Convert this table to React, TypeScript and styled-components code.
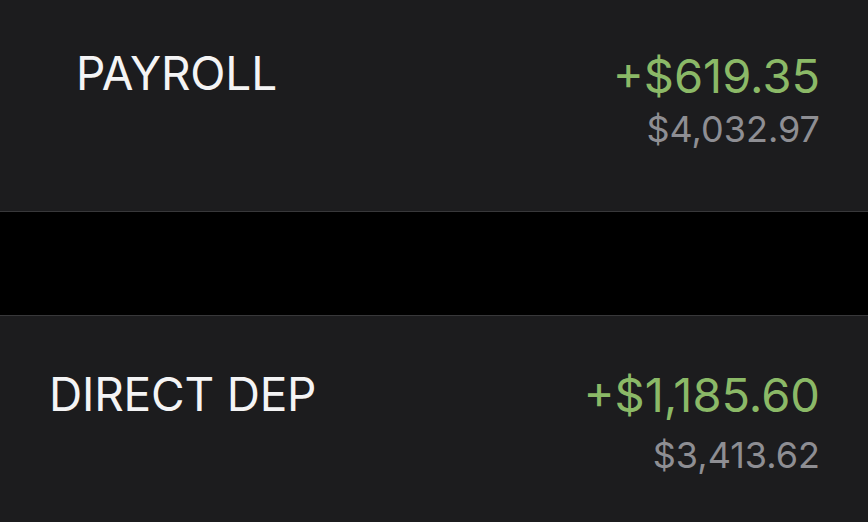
import React from 'react';
import styled, { createGlobalStyle } from 'styled-components';

const surface = '#1c1c1e';
const separator = '#38383a';
const positive = '#8bb967';
const secondary = '#8e8e93';

const GlobalStyle = createGlobalStyle`
  html, body {
    margin: 0;
    padding: 0;
    background: ${surface};
  }

  body {
    font-family: Inter, 'Noto Sans', sans-serif;
    -webkit-font-smoothing: antialiased;
  }
`;

const Screen = styled.div`
  display: flex;
  flex-direction: column;
  width: 868px;
  height: 522px;
  overflow: hidden;
  background: #000;
`;

const Row = styled.div<{ padTop: number; indent: number; edge: 'top' | 'bottom' }>`
  display: flex;
  justify-content: space-between;
  align-items: flex-start;
  background: ${surface};
  padding: ${(p) => p.padTop}px 48px 0 ${(p) => p.indent}px;
  ${(p) => (p.edge === 'top' ? 'border-top' : 'border-bottom')}: 1px solid ${separator};
`;

const FirstRow = styled(Row)`
  height: 212px;
  box-sizing: border-box;
`;

const LastRow = styled(Row)`
  flex: 1;
`;

const Gap = styled.div`
  height: 103px;
  background: #000;
`;

const Label = styled.div`
  color: #f4f4f5;
  font-size: 46px;
  line-height: 1;
  letter-spacing: -0.2px;
`;

const Amounts = styled.div<{ offset: number; spacing: number }>`
  display: flex;
  flex-direction: column;
  align-items: flex-end;
  margin-top: ${(p) => p.offset}px;
  gap: ${(p) => p.spacing}px;
`;

const Change = styled.div`
  color: ${positive};
  font-size: 47px;
  line-height: 1;
`;

const Balance = styled.div`
  color: ${secondary};
  font-size: 36px;
  line-height: 1;
`;

interface TransactionProps {
  label: string;
  change: string;
  balance: string;
  offset: number;
  spacing: number;
}

const Transaction = ({ label, change, balance, offset, spacing }: TransactionProps) => (
  <>
    <Label>{label}</Label>
    <Amounts offset={offset} spacing={spacing}>
      <Change>{change}</Change>
      <Balance>{balance}</Balance>
    </Amounts>
  </>
);

export default function App() {
  return (
    <>
      <GlobalStyle />
      <Screen>
        <FirstRow padTop={50} indent={76} edge="bottom">
          <Transaction label="PAYROLL" change="+$619.35" balance="$4,032.97" offset={2} spacing={12} />
        </FirstRow>
        <Gap />
        <LastRow padTop={55} indent={49} edge="top">
          <Transaction label="DIRECT DEP" change="+$1,185.60" balance="$3,413.62" offset={0} spacing={19} />
        </LastRow>
      </Screen>
    </>
  );
}
